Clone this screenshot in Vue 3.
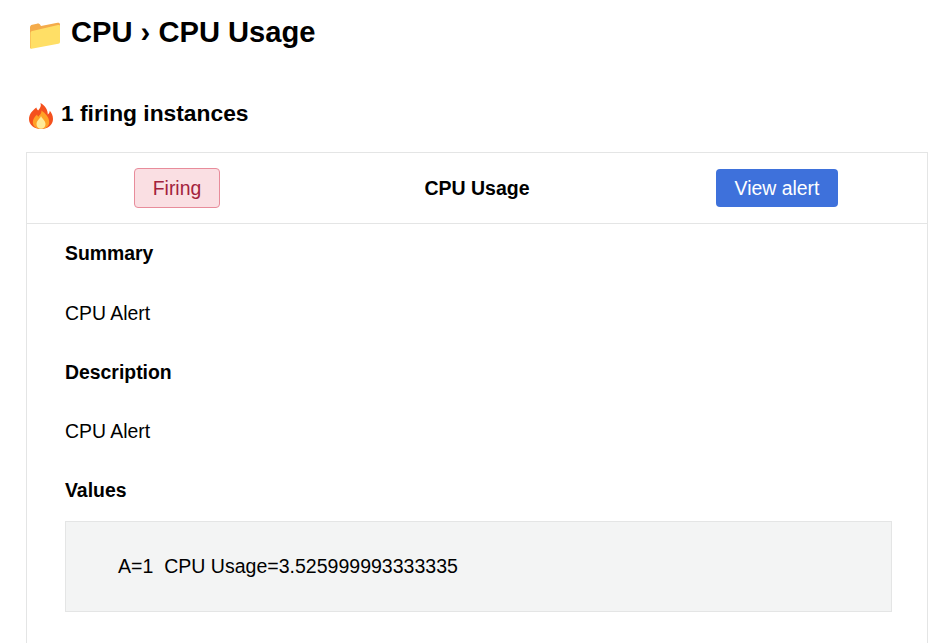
<script setup>
const sections = [
  { label: 'Summary', text: 'CPU Alert' },
  { label: 'Description', text: 'CPU Alert' }
]
</script>

<template>
  <div class="page">
    <h1 class="title">
      <svg class="folder" viewBox="0 0 30 27" aria-hidden="true">
        <path fill="#f4ab4b" d="M0 5.500C0 4 .8 3 2.200 2.700L7 1.700c1.600-.3 2.900.3 3.500 1.500L11 4 27.500.8C29 .5 30 1.200 30 2.500V8L1 26.500 0 26z" />
        <path fill="#ffdf66" d="M1.500 26.800c-.6.1-1-.2-1-.9V11.200c0-1.200.7-2 1.800-2.300L28 3c1.200-.3 2-.1 2 1.300v15.400c0 1.200-.6 1.800-1.700 2z" />
      </svg>
      <span>CPU › CPU Usage</span>
    </h1>
    <h2 class="count">
      <svg class="flame" viewBox="0 0 24 26" aria-hidden="true">
        <path fill="#f4511e" d="M11.500 0c1 3.200-.3 5.300-2.400 7.500-1-1.100-1.500-1.800-1.800-3C4 7 0 11 0 16c0 6 5.200 10 12 10s12-4 12-10c0-3.400-1.300-6-3.200-8.200-.2 1.700-.8 2.900-2 3.800C19 7 16 2.500 11.500 0z" />
        <path fill="#ffa126" d="M12.500 7.500c.4 2.700-1.800 4.400-3.300 6.200-.6-.7-.9-1.200-1.100-2.100C5.500 14 3.800 16.500 3.800 19.300c0 4 3.700 6.700 8.200 6.700s8.200-2.700 8.200-6.700c0-5.400-3.900-8.800-7.700-11.800z" />
        <path fill="#ffeb99" d="M12 13c-.3 2.300-4.500 4.200-4.500 8 0 2.900 2 4.800 4.500 4.800s4.500-1.900 4.500-4.800c0-3.800-4-5.700-4.500-8z" />
      </svg>
      <span>1 firing instances</span>
    </h2>
    <section class="card">
      <header class="head">
        <div class="cell"><span class="badge">Firing</span></div>
        <div class="cell name">CPU Usage</div>
        <div class="cell"><a class="btn">View alert</a></div>
      </header>
      <div class="body">
        <template v-for="s in sections" :key="s.label">
          <p class="label">{{ s.label }}</p>
          <p class="text">{{ s.text }}</p>
        </template>
        <p class="label">Values</p>
        <div class="values">A=1&nbsp; CPU Usage=3.525999993333335</div>
      </div>
    </section>
  </div>
</template>

<style>
html, body { margin: 0; background: #fff; overflow: hidden; }
</style>

<style scoped>
.page {
  box-sizing: border-box;
  width: 949px;
  height: 643px;
  overflow: hidden;
  padding: 14px 21px 0 26px;
  font-family: "Liberation Sans", Arial, sans-serif;
  color: #000;
  font-size: 19.4px;
}
.title {
  display: flex;
  align-items: center;
  gap: 11px;
  margin: 0;
  height: 36px;
  font-size: 29.15px;
  line-height: 36px;
  font-weight: 700;
}
.folder { width: 30px; height: 27px; flex: none; margin: 6px 0 0 4px; }
.count {
  display: flex;
  align-items: center;
  gap: 8px;
  margin: 45px 0 0;
  height: 36px;
  font-size: 22.8px;
  line-height: 36px;
  font-weight: 700;
}
.flame { width: 24px; height: 26px; flex: none; margin: 5px 0 0 3px; }
.card {
  margin-top: 21px;
  border: 1px solid #e4e5e5;
  height: 600px;
}
.head {
  display: grid;
  grid-template-columns: repeat(3, 1fr);
  align-items: center;
  height: 70px;
  border-bottom: 1px solid #e4e5e5;
}
.cell { text-align: center; }
.name { font-weight: 700; font-size: 19.5px; }
.badge {
  display: inline-block;
  box-sizing: border-box;
  width: 86px;
  height: 40px;
  line-height: 38px;
  color: #a3223c;
  background: #fadfe3;
  border: 1px solid #e88c9b;
  border-radius: 4px;
}
.btn {
  display: inline-block;
  box-sizing: border-box;
  width: 122px;
  height: 38px;
  line-height: 38px;
  color: #fff;
  background: #3e71db;
  border-radius: 4px;
}
.body { padding: 19px 35px 0 38px; }
.label { margin: 0; font-weight: 700; line-height: 22px; }
.label:first-child { margin: -1px 0 38px; }
.text { margin: 37px 0; line-height: 22px; }
.values {
  margin-top: 20px;
  box-sizing: border-box;
  height: 91px;
  line-height: 88px;
  padding-left: 52px;
  font-size: 19.55px;
  background: #f3f4f4;
  border: 1px solid #e4e5e5;
}
</style>
